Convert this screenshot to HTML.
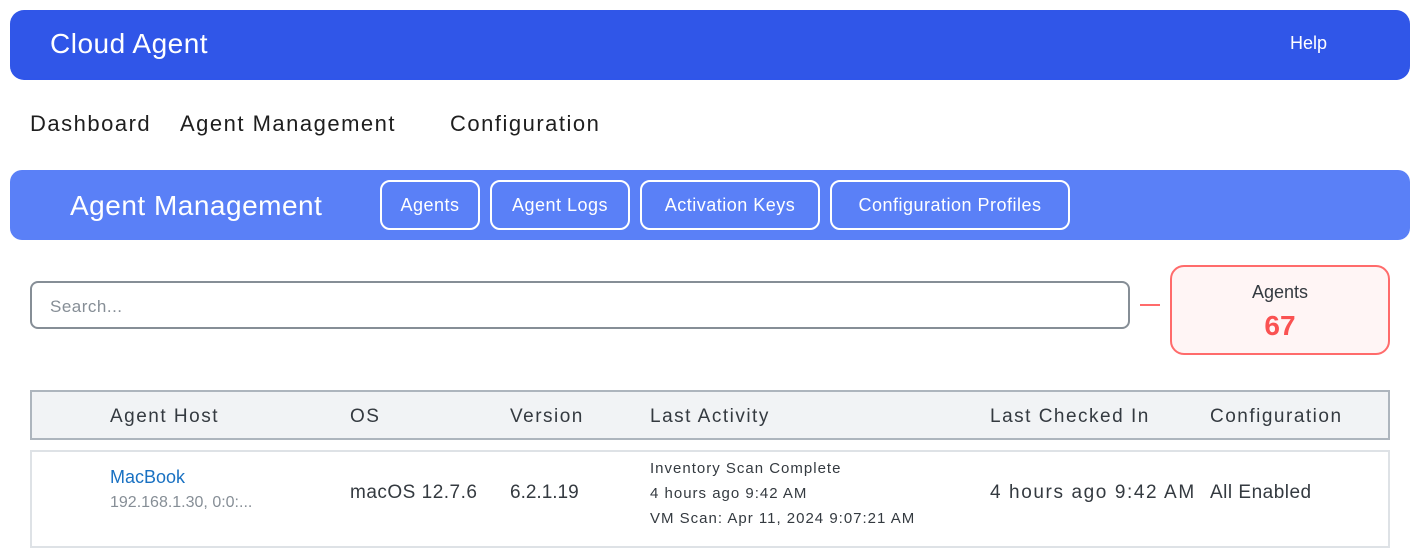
<!DOCTYPE html>
<html><head><meta charset="utf-8"><style>
*{margin:0;padding:0;box-sizing:border-box}
body{width:1420px;height:560px;background:#fff;position:relative;overflow:hidden;font-family:"Liberation Sans",sans-serif;color:#1e1e1e}
.a{position:absolute;white-space:nowrap}
.hdr{left:10px;top:10px;width:1400px;height:70px;background:#3056e8;border-radius:14px;border-bottom:2px solid #2f55ea}
.sub{left:10px;top:170px;width:1400px;height:70px;background:#5a80f7;border-radius:12px}
.btn{top:180px;height:50px;border:2px solid #fff;border-radius:10px;color:#fff;font-size:18px;display:flex;align-items:center;justify-content:center;letter-spacing:0.5px}
.th{font-size:19px;color:#343a40;top:406px;letter-spacing:1.5px}
</style></head><body>
<div class="a hdr"></div>
<div class="a" style="left:50px;top:28px;font-size:28px;color:#fff;letter-spacing:0.5px">Cloud Agent</div>
<div class="a" style="left:1290px;top:33px;font-size:18px;color:#fff">Help</div>
<div class="a" style="left:30px;top:111px;font-size:22px;letter-spacing:1.5px">Dashboard</div>
<div class="a" style="left:180px;top:111px;font-size:22px;letter-spacing:1.5px">Agent Management</div>
<div class="a" style="left:450px;top:111px;font-size:22px;letter-spacing:1.5px">Configuration</div>
<div class="a sub"></div>
<div class="a" style="left:70px;top:190px;font-size:28px;color:#fff;letter-spacing:0.5px">Agent Management</div>
<div class="a btn" style="left:380px;width:100px">Agents</div>
<div class="a btn" style="left:490px;width:140px">Agent Logs</div>
<div class="a btn" style="left:640px;width:180px">Activation Keys</div>
<div class="a btn" style="left:830px;width:240px">Configuration Profiles</div>
<div class="a" style="left:30px;top:281px;width:1100px;height:48px;border:2px solid #868e96;border-radius:8px"></div>
<div class="a" style="left:50px;top:297px;font-size:17px;color:#868e96;letter-spacing:0.5px">Search...</div>
<div class="a" style="left:1140px;top:304px;width:20px;height:2px;background:#ff6b6b"></div>
<div class="a" style="left:1170px;top:265px;width:220px;height:90px;background:#fff5f5;border:2px solid #ff6b6b;border-radius:14px"></div>
<div class="a" style="left:1170px;top:282px;width:220px;text-align:center;font-size:18px;color:#343a40">Agents</div>
<div class="a" style="left:1170px;top:310px;width:220px;text-align:center;font-size:28px;color:#fa5252;font-weight:bold">67</div>
<div class="a" style="left:30px;top:390px;width:1360px;height:50px;background:#f1f3f5;border:2px solid #adb5bd"></div>
<div class="a th" style="left:110px">Agent Host</div>
<div class="a th" style="left:350px">OS</div>
<div class="a th" style="left:510px">Version</div>
<div class="a th" style="left:650px">Last Activity</div>
<div class="a th" style="left:990px">Last Checked In</div>
<div class="a th" style="left:1210px">Configuration</div>
<div class="a" style="left:30px;top:450px;width:1360px;height:98px;border:2px solid #dee2e6"></div>
<div class="a" style="left:110px;top:467px;font-size:18px;color:#1971c2">MacBook</div>
<div class="a" style="left:110px;top:494px;font-size:16px;color:#868e96">192.168.1.30, 0:0:...</div>
<div class="a" style="left:350px;top:482px;font-size:19px;color:#343a40;letter-spacing:0.5px">macOS 12.7.6</div>
<div class="a" style="left:510px;top:482px;font-size:19px;color:#343a40">6.2.1.19</div>
<div class="a" style="left:650px;top:460px;font-size:15px;color:#343a40;letter-spacing:1px">Inventory Scan Complete</div>
<div class="a" style="left:650px;top:485px;font-size:15px;color:#343a40;letter-spacing:1px">4 hours ago 9:42 AM</div>
<div class="a" style="left:650px;top:510px;font-size:15px;color:#343a40;letter-spacing:1px">VM Scan: Apr 11, 2024 9:07:21 AM</div>
<div class="a" style="left:990px;top:482px;font-size:19px;color:#343a40;letter-spacing:1.6px">4 hours ago 9:42 AM</div>
<div class="a" style="left:1210px;top:482px;font-size:19px;color:#343a40;letter-spacing:0.5px">All Enabled</div>
</body></html>
